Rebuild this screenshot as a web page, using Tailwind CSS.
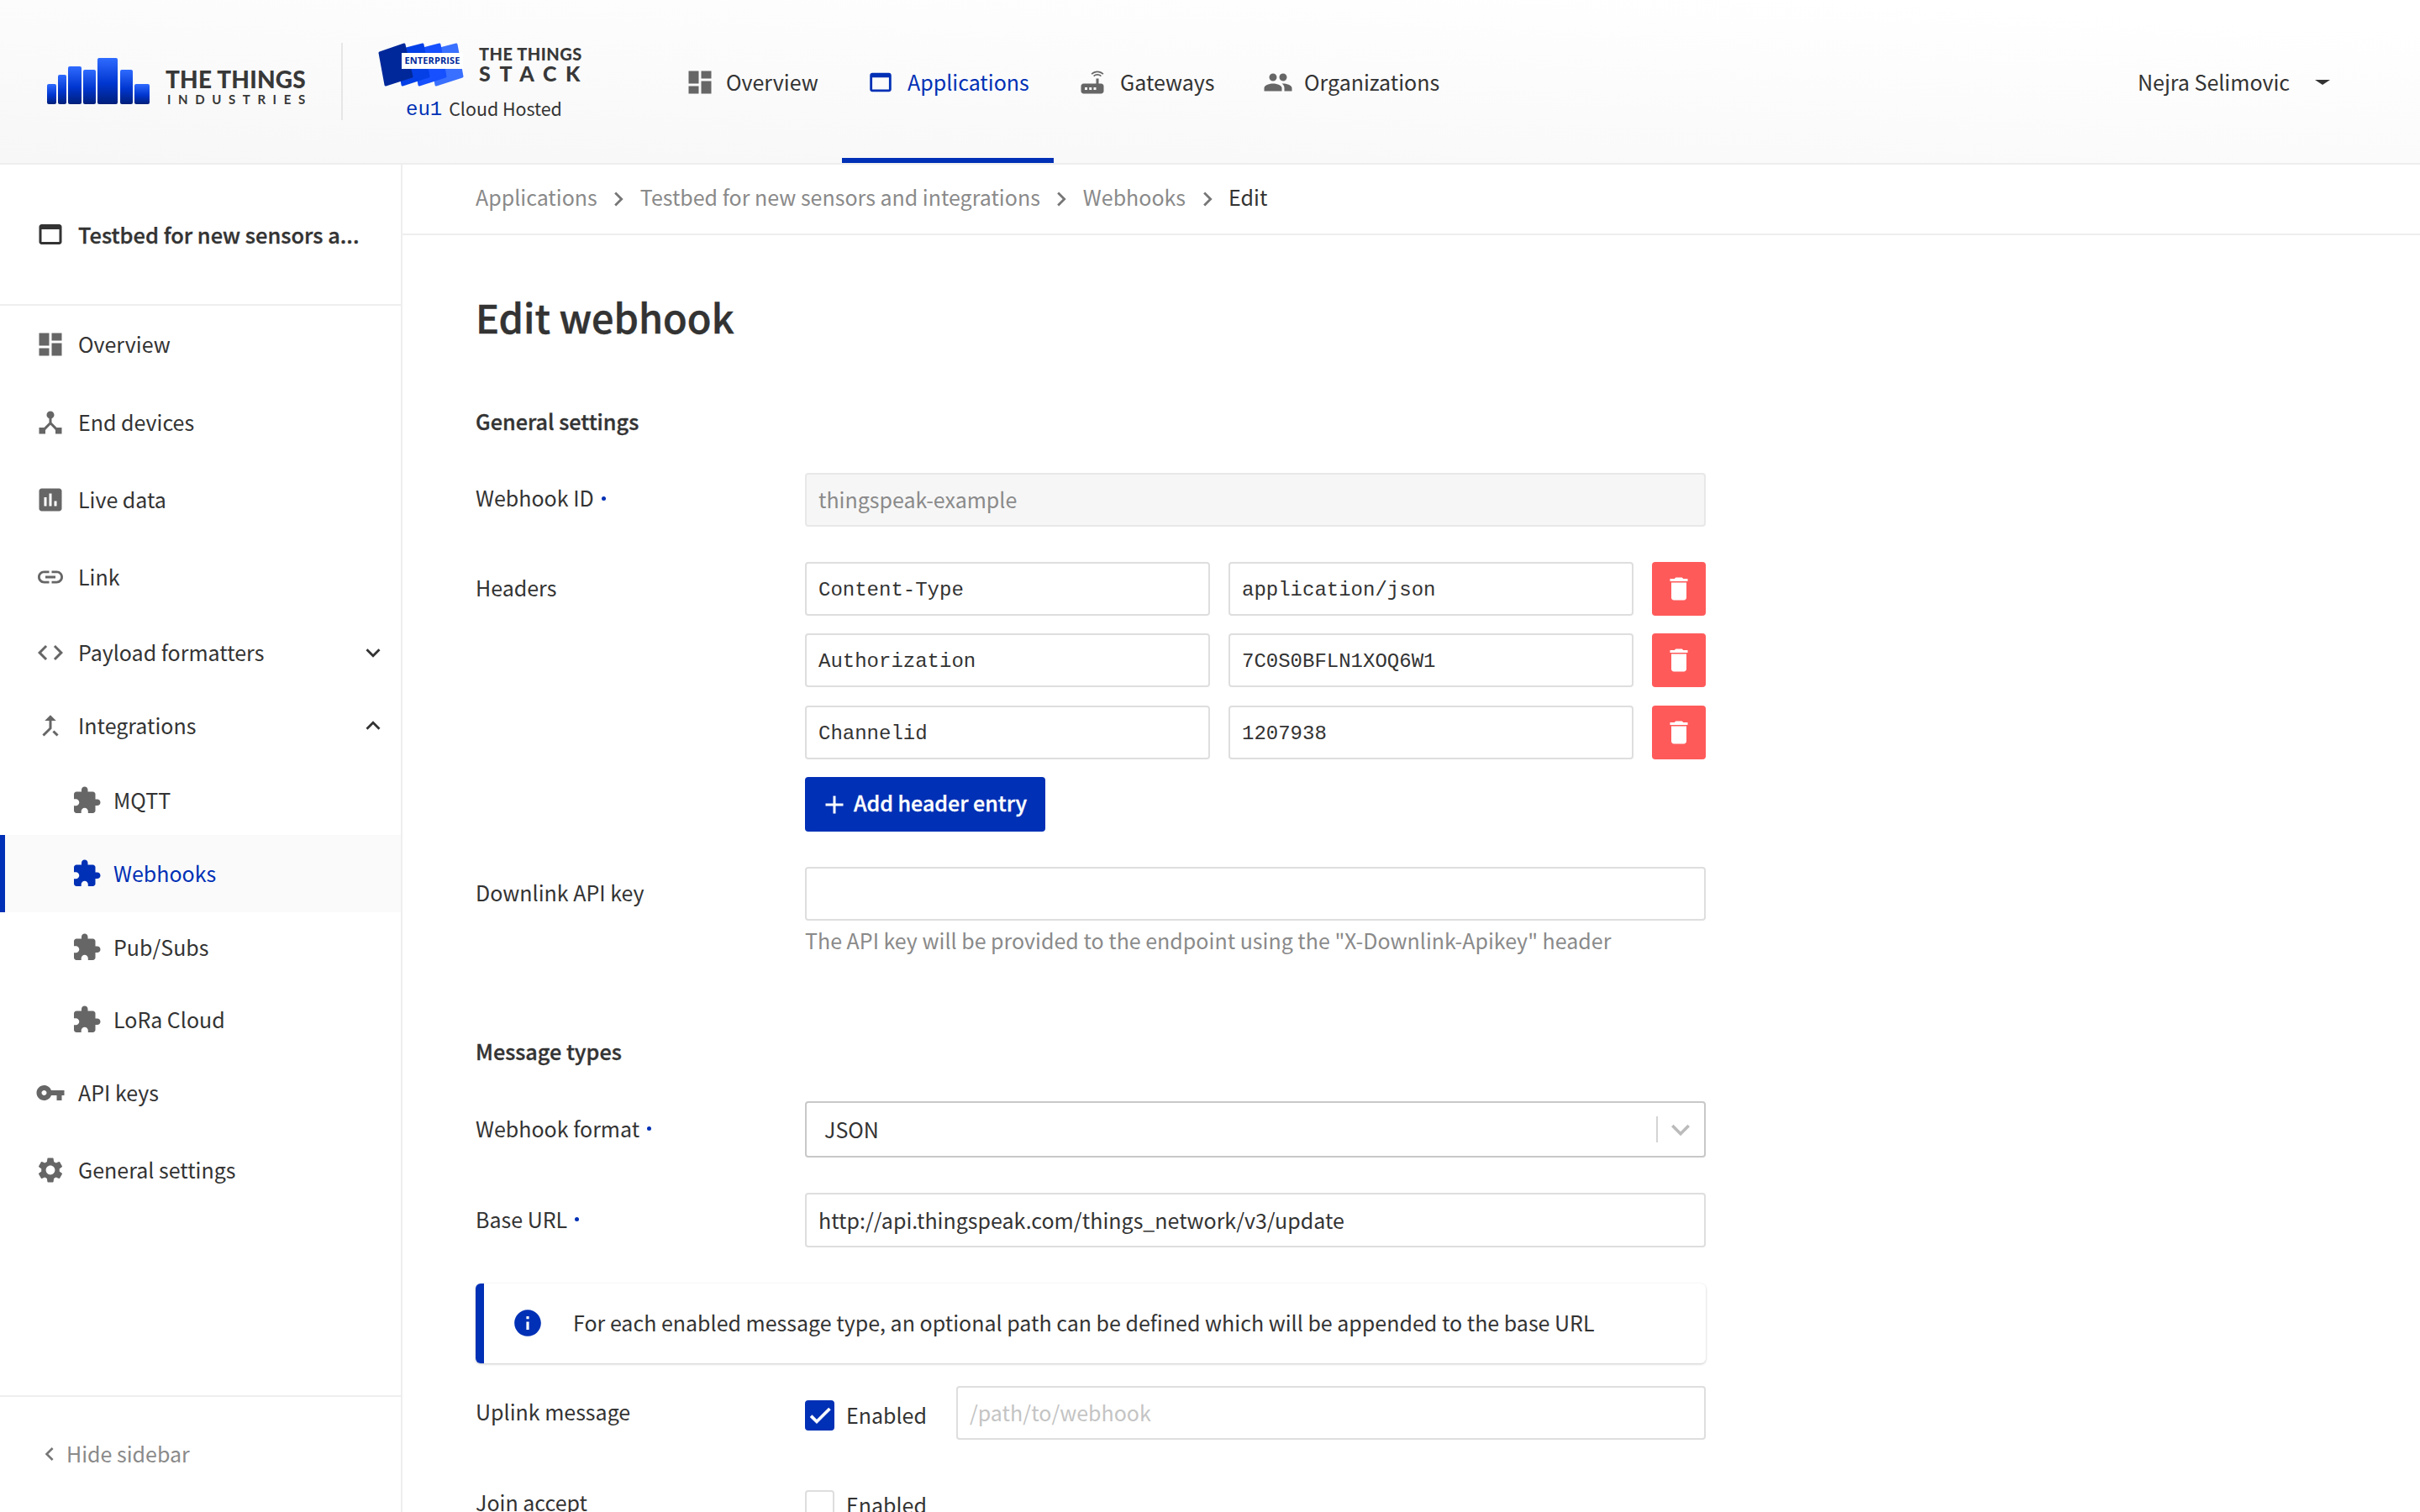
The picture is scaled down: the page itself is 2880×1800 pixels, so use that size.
<!DOCTYPE html>
<html lang="en">

<head>
  <meta charset="UTF-8" />
  <title>Edit webhook - The Things Stack</title>
  <script src="https://cdn.jsdelivr.net/npm/@tailwindcss/browser@4"></script>
</head>

<body class="font-['Noto_Sans_CJK_SC',sans-serif] text-[25px] text-[#333] bg-white">
  <div class="w-[2880px] h-[1800px] overflow-hidden flex flex-col">

    <!-- Top bar -->
    <header class="h-[196px] shrink-0 border-b-2 border-[#eee] bg-[linear-gradient(183deg,#fff_10%,#f7f7f7_100%)] flex items-start relative">
      <!-- TTI logo -->
      <div class="ml-[56px] mt-[69px] flex items-end w-[309px]">
        <svg width="122" height="55" viewBox="0 0 122 55" class="shrink-0">
          <defs>
            <linearGradient id="bars" x1="0" y1="0" x2="0" y2="1">
              <stop offset="0" stop-color="#2f6bff" />
              <stop offset="0.55" stop-color="#0036d0" />
              <stop offset="1" stop-color="#001f7a" />
            </linearGradient>
          </defs>
          <rect x="0" y="31" width="11" height="24" rx="2" fill="url(#bars)" />
          <rect x="13" y="20" width="10" height="35" rx="2" fill="url(#bars)" />
          <rect x="25" y="10" width="16" height="45" rx="2" fill="url(#bars)" />
          <rect x="43" y="14" width="15" height="41" rx="2" fill="url(#bars)" />
          <rect x="60" y="0" width="24" height="55" rx="2" fill="url(#bars)" />
          <rect x="87" y="14" width="15" height="41" rx="2" fill="url(#bars)" />
          <rect x="104" y="31" width="18" height="24" rx="2" fill="url(#bars)" />
        </svg>
        <div class="ml-[19px] mb-[-2px] font-['Lato',sans-serif] text-[#383838] leading-none">
          <div class="text-[28px] font-black tracking-[0.2px] whitespace-nowrap">THE THINGS</div>
          <div class="mt-[3px] ml-[2px] text-[15px] font-bold tracking-[8.6px] whitespace-nowrap">INDUSTRIES</div>
        </div>
      </div>

      <div class="w-[2px] h-[92px] mt-[51px] ml-[41px] bg-[#e6e6e6]"></div>

      <!-- Stack logo -->
      <div class="ml-[42px] mt-[51px] w-[240px] flex flex-col">
        <div class="flex">
          <div class="relative w-[102px] h-[52px] shrink-0">
            <svg width="102" height="52" viewBox="0 0 102 52">
              <g stroke-width="3" stroke-linejoin="round">
                <path d="M62 10 L93 2 L100 40 L69 50 Z" fill="#3a70ff" stroke="#3a70ff" />
                <path d="M42 10 L73 2 L80 40 L49 50 Z" fill="#1650ff" stroke="#1650ff" />
                <path d="M22 10 L53 2 L60 40 L29 50 Z" fill="#0440e6" stroke="#0440e6" />
                <path d="M2 12 L31 2 L40 40 L9 50 Z" fill="#00289a" stroke="#00289a" />
              </g>
            </svg>
            <div class="absolute left-[28px] top-[12px] w-[73px] h-[19px] bg-white flex items-center justify-center font-['Open_Sans',sans-serif] text-[11px] font-bold text-[#00299b] tracking-[0.1px]">ENTERPRISE</div>
          </div>
          <div class="ml-[18px] font-['Lato',sans-serif] font-black text-[#383838] leading-none">
            <div class="mt-[3px] text-[20px] tracking-[0.5px] whitespace-nowrap">THE THINGS</div>
            <div class="mt-[1px] text-[25px] tracking-[10.6px] whitespace-nowrap">STACK</div>
          </div>
        </div>
        <div class="mt-[10px] ml-[33px] h-[32px] flex items-center whitespace-nowrap text-[21.4px]">
          <span class="font-['Liberation_Mono',monospace] text-[24px] text-[#0030b5] mt-[3px]">eu1</span>
          <span class="ml-[8px]">Cloud Hosted</span>
        </div>
      </div>

      <!-- Main nav -->
      <nav class="absolute left-[802px] top-0 h-[194px] flex">
        <a class="h-full w-[200px] flex items-center gap-[8px] pl-[13px] pt-[2px]">
          <svg width="36" height="36" viewBox="0 0 24 24" fill="#666"><path d="M3 13h8V3H3v10zm0 8h8v-6H3v6zm10 0h8V11h-8v10zm0-18v6h8V3h-8z" /></svg>
          <span class="ml-[5px]">Overview</span>
        </a>
        <a class="h-full w-[252px] flex items-center gap-[8px] pl-[29px] pt-[2px] border-b-[6px] border-[#0030b5] text-[#0030b5]">
          <svg width="34" height="34" viewBox="0 0 24 24" fill="#0030b5" class="mb-[-6px]"><path d="M19 4H5c-1.11 0-2 .9-2 2v12c0 1.1.89 2 2 2h14c1.1 0 2-.9 2-2V6c0-1.1-.89-2-2-2zm0 14H5V8h14v10z" /></svg>
          <span class="ml-[7px] mb-[-6px]">Applications</span>
        </a>
        <a class="h-full w-[249px] flex items-center gap-[8px] pl-[28px] pt-[2px]">
          <svg width="36" height="36" viewBox="0 0 24 24" fill="#666"><path d="M20.2 5.9l.8-.8C19.6 3.7 17.8 3 16 3s-3.6.7-5 2.1l.8.8C13 4.8 14.5 4.2 16 4.2s3 .6 4.2 1.7zm-.9.8c-.9-.9-2.1-1.4-3.3-1.4s-2.4.5-3.3 1.4l.8.8c.7-.7 1.6-1 2.5-1 .9 0 1.8.3 2.5 1l.8-.8zM19 13h-2V9h-2v4H5c-1.1 0-2 .9-2 2v4c0 1.1.9 2 2 2h14c1.1 0 2-.9 2-2v-4c0-1.1-.9-2-2-2zM8 18H6v-2h2v2zm3.5 0h-2v-2h2v2zm3.5 0h-2v-2h2v2z" /></svg>
          <span class="ml-[7px]">Gateways</span>
        </a>
        <a class="h-full flex items-center gap-[8px] pt-[2px]">
          <svg width="36" height="36" viewBox="0 0 24 24" fill="#666"><path d="M16 11c1.66 0 2.99-1.34 2.99-3S17.66 5 16 5c-1.66 0-3 1.34-3 3s1.34 3 3 3zm-8 0c1.66 0 2.99-1.34 2.99-3S9.66 5 8 5C6.34 5 5 6.34 5 8s1.34 3 3 3zm0 2c-2.33 0-7 1.17-7 3.5V19h14v-2.5c0-2.33-4.67-3.5-7-3.5zm8 0c-.29 0-.62.02-.97.05 1.16.84 1.97 1.97 1.97 3.45V19h6v-2.5c0-2.33-4.67-3.5-7-3.5z" /></svg>
          <span class="ml-[5px]">Organizations</span>
        </a>
      </nav>

      <!-- User -->
      <div class="absolute left-[2544px] top-0 h-[194px] flex items-center pt-[2px]">
        <span>Nejra Selimovic</span>
        <span class="ml-[30px] w-0 h-0 border-x-[9px] border-x-transparent border-t-[6px] border-t-[#333]"></span>
      </div>
    </header>

    <div class="flex flex-1 min-h-0">
      <!-- Sidebar -->
      <aside class="w-[479px] shrink-0 border-r-2 border-[#eee] flex flex-col">
        <div class="h-[168px] border-b-2 border-[#eee] pl-[42px] flex items-center gap-[15px] shrink-0">
          <svg width="36" height="36" viewBox="0 0 24 24" fill="#333"><path d="M19 4H5c-1.11 0-2 .9-2 2v12c0 1.1.89 2 2 2h14c1.1 0 2-.9 2-2V6c0-1.1-.89-2-2-2zm0 14H5V8h14v10z" /></svg>
          <span class="text-[25.4px] font-medium [-webkit-text-stroke:0.35px] whitespace-nowrap">Testbed for new sensors a...</span>
        </div>

        <nav class="flex-1 flex flex-col mt-[-1px]">
          <a class="h-[93px] shrink-0 flex items-center gap-[15px] pl-[42px]">
            <svg width="36" height="36" viewBox="0 0 24 24" fill="#666"><path d="M3 13h8V3H3v10zm0 8h8v-6H3v6zm10 0h8V11h-8v10zm0-18v6h8V3h-8z" /></svg>
            <span>Overview</span>
          </a>
          <a class="h-[93px] shrink-0 flex items-center gap-[15px] pl-[42px]">
            <svg width="36" height="36" viewBox="0 0 24 24" fill="#666"><path d="M17 16l-4-4V8.82C14.16 8.4 15 7.3 15 6c0-1.66-1.34-3-3-3S9 4.34 9 6c0 1.3.84 2.4 2 2.82V12l-4 4H3v5h5v-3.05l4-4.2 4 4.2V21h5v-5h-4z" /></svg>
            <span>End devices</span>
          </a>
          <a class="h-[92px] shrink-0 flex items-center gap-[15px] pl-[42px]">
            <svg width="36" height="36" viewBox="0 0 24 24" fill="#666"><path d="M19 3H5c-1.1 0-2 .9-2 2v14c0 1.1.9 2 2 2h14c1.1 0 2-.9 2-2V5c0-1.1-.9-2-2-2zM9 17H7v-7h2v7zm4 0h-2V7h2v10zm4 0h-2v-4h2v4z" /></svg>
            <span>Live data</span>
          </a>
          <a class="h-[92px] shrink-0 flex items-center gap-[15px] pl-[42px]">
            <svg width="36" height="36" viewBox="0 0 24 24" fill="#666"><path d="M3.9 12c0-1.71 1.39-3.1 3.1-3.1h4V7H7c-2.76 0-5 2.24-5 5s2.24 5 5 5h4v-1.9H7c-1.71 0-3.1-1.39-3.1-3.1zM8 13h8v-2H8v2zm9-6h-4v1.9h4c1.71 0 3.1 1.39 3.1 3.1s-1.39 3.1-3.1 3.1h-4V17h4c2.76 0 5-2.24 5-5s-2.24-5-5-5z" /></svg>
            <span>Link</span>
          </a>
          <a class="h-[88px] shrink-0 flex items-center gap-[15px] pl-[42px]">
            <svg width="36" height="36" viewBox="0 0 24 24" fill="#666"><path d="M9.4 16.6L4.8 12l4.6-4.6L8 6l-6 6 6 6 1.4-1.4zm5.2 0l4.6-4.6-4.6-4.6L16 6l6 6-6 6-1.4-1.4z" /></svg>
            <span>Payload formatters</span>
            <svg width="34" height="34" viewBox="0 0 24 24" fill="#333" class="ml-auto mr-[16px]"><path d="M7.41 8.59L12 13.17l4.59-4.58L18 10l-6 6-6-6z" /></svg>
          </a>
          <a class="h-[89px] shrink-0 flex items-center gap-[15px] pl-[42px] pb-[4px]">
            <svg width="36" height="36" viewBox="0 0 24 24" fill="#666"><path d="M17 20.41L18.41 19 15 15.59 13.59 17 17 20.41zM7.5 8H11v5.59L5.59 19 7 20.41l6-6V8h3.5L12 3.5 7.5 8z" /></svg>
            <span>Integrations</span>
            <svg width="34" height="34" viewBox="0 0 24 24" fill="#333" class="ml-auto mr-[16px]"><path d="M7.41 15.41L12 10.83l4.59 4.58L18 14l-6-6-6 6z" /></svg>
          </a>
          <a class="h-[86px] shrink-0 flex items-center gap-[14px] pl-[85px]">
            <svg width="36" height="36" viewBox="0 0 24 24" fill="#666"><path d="M20.5 11H19V7c0-1.1-.9-2-2-2h-4V3.5C13 2.12 11.88 1 10.5 1S8 2.12 8 3.5V5H4c-1.1 0-1.99.9-1.99 2v3.8H3.5c1.49 0 2.7 1.21 2.7 2.7s-1.21 2.7-2.7 2.7H2V20c0 1.1.9 2 2 2h3.8v-1.5c0-1.49 1.21-2.7 2.7-2.7 1.49 0 2.7 1.21 2.7 2.7V22H17c1.1 0 2-.9 2-2v-4h1.5c1.38 0 2.5-1.12 2.5-2.5S21.88 11 20.5 11z" /></svg>
            <span>MQTT</span>
          </a>
          <a class="h-[92px] shrink-0 flex items-center gap-[14px] pl-[79px] border-l-[6px] border-[#0030b5] bg-[#fafafa] text-[#0030b5] my-[-2px]">
            <svg width="36" height="36" viewBox="0 0 24 24" fill="#0030b5"><path d="M20.5 11H19V7c0-1.1-.9-2-2-2h-4V3.5C13 2.12 11.88 1 10.5 1S8 2.12 8 3.5V5H4c-1.1 0-1.99.9-1.99 2v3.8H3.5c1.49 0 2.7 1.21 2.7 2.7s-1.21 2.7-2.7 2.7H2V20c0 1.1.9 2 2 2h3.8v-1.5c0-1.49 1.21-2.7 2.7-2.7 1.49 0 2.7 1.21 2.7 2.7V22H17c1.1 0 2-.9 2-2v-4h1.5c1.38 0 2.5-1.12 2.5-2.5S21.88 11 20.5 11z" /></svg>
            <span>Webhooks</span>
          </a>
          <a class="h-[87px] shrink-0 flex items-center gap-[14px] pl-[85px]">
            <svg width="36" height="36" viewBox="0 0 24 24" fill="#666"><path d="M20.5 11H19V7c0-1.1-.9-2-2-2h-4V3.5C13 2.12 11.88 1 10.5 1S8 2.12 8 3.5V5H4c-1.1 0-1.99.9-1.99 2v3.8H3.5c1.49 0 2.7 1.21 2.7 2.7s-1.21 2.7-2.7 2.7H2V20c0 1.1.9 2 2 2h3.8v-1.5c0-1.49 1.21-2.7 2.7-2.7 1.49 0 2.7 1.21 2.7 2.7V22H17c1.1 0 2-.9 2-2v-4h1.5c1.38 0 2.5-1.12 2.5-2.5S21.88 11 20.5 11z" /></svg>
            <span>Pub/Subs</span>
          </a>
          <a class="h-[85px] shrink-0 flex items-center gap-[14px] pl-[85px]">
            <svg width="36" height="36" viewBox="0 0 24 24" fill="#666"><path d="M20.5 11H19V7c0-1.1-.9-2-2-2h-4V3.5C13 2.12 11.88 1 10.5 1S8 2.12 8 3.5V5H4c-1.1 0-1.99.9-1.99 2v3.8H3.5c1.49 0 2.7 1.21 2.7 2.7s-1.21 2.7-2.7 2.7H2V20c0 1.1.9 2 2 2h3.8v-1.5c0-1.49 1.21-2.7 2.7-2.7 1.49 0 2.7 1.21 2.7 2.7V22H17c1.1 0 2-.9 2-2v-4h1.5c1.38 0 2.5-1.12 2.5-2.5S21.88 11 20.5 11z" /></svg>
            <span>LoRa Cloud</span>
          </a>
          <a class="h-[89px] shrink-0 flex items-center gap-[15px] pl-[42px]">
            <svg width="36" height="36" viewBox="0 0 24 24" fill="#666"><path d="M12.65 10C11.83 7.67 9.61 6 7 6c-3.31 0-6 2.69-6 6s2.69 6 6 6c2.61 0 4.83-1.67 5.65-4H17v4h4v-4h2v-4H12.65zM7 14c-1.1 0-2-.9-2-2s.9-2 2-2 2 .9 2 2-.9 2-2 2z" /></svg>
            <span>API keys</span>
          </a>
          <a class="h-[95px] shrink-0 flex items-center gap-[15px] pl-[42px]">
            <svg width="36" height="36" viewBox="0 0 24 24" fill="#666"><path d="M19.14 12.94c.04-.3.06-.61.06-.94 0-.32-.02-.64-.07-.94l2.03-1.58c.18-.14.23-.41.12-.61l-1.92-3.32c-.12-.22-.37-.29-.59-.22l-2.39.96c-.5-.38-1.03-.7-1.62-.94l-.36-2.54c-.04-.24-.24-.41-.48-.41h-3.84c-.24 0-.43.17-.47.41l-.36 2.54c-.59.24-1.13.57-1.62.94l-2.39-.96c-.22-.08-.47 0-.59.22L2.74 8.87c-.12.21-.08.47.12.61l2.03 1.58c-.05.3-.09.63-.09.94s.02.64.07.94l-2.03 1.58c-.18.14-.23.41-.12.61l1.92 3.32c.12.22.37.29.59.22l2.39-.96c.5.38 1.03.7 1.62.94l.36 2.54c.05.24.24.41.48.41h3.84c.24 0 .44-.17.47-.41l.36-2.54c.59-.24 1.13-.56 1.62-.94l2.39.96c.22.08.47 0 .59-.22l1.92-3.32c.12-.22.07-.47-.12-.61l-2.01-1.58zM12 15.6c-1.98 0-3.6-1.62-3.6-3.6s1.62-3.6 3.6-3.6 3.6 1.62 3.6 3.6-1.62 3.6-3.6 3.6z" /></svg>
            <span>General settings</span>
          </a>
        </nav>

        <div class="h-[139px] shrink-0 border-t-2 border-[#eee] pl-[43px] pb-[2px] flex items-center gap-[4px] text-[#8a8a8a]">
          <svg width="32" height="32" viewBox="0 0 24 24" fill="#777"><path d="M15.41 7.41L14 6l-6 6 6 6 1.41-1.41L10.83 12z" /></svg>
          <span>Hide sidebar</span>
        </div>
      </aside>

      <main class="flex-1 min-w-0">
        <!-- Breadcrumbs -->
        <div class="h-[84px] border-b-2 border-[#eee] pl-[87px] flex items-center text-[#8a8a8a] pb-[4px]">
          <span>Applications</span>
          <svg width="34" height="34" viewBox="0 0 24 24" fill="#777" class="mx-[8.5px] mt-[4px]"><path d="M10 6L8.59 7.41 13.17 12l-4.58 4.59L10 18l6-6z" /></svg>
          <span>Testbed for new sensors and integrations</span>
          <svg width="34" height="34" viewBox="0 0 24 24" fill="#777" class="mx-[8.5px] mt-[4px]"><path d="M10 6L8.59 7.41 13.17 12l-4.58 4.59L10 18l6-6z" /></svg>
          <span>Webhooks</span>
          <svg width="34" height="34" viewBox="0 0 24 24" fill="#777" class="mx-[8.5px] mt-[4px]"><path d="M10 6L8.59 7.41 13.17 12l-4.58 4.59L10 18l6-6z" /></svg>
          <span class="text-[#333]">Edit</span>
        </div>

        <div class="pl-[87px] w-[1551px]">
          <h1 class="mt-[67px] h-[60px] flex items-center text-[46.8px] font-medium [-webkit-text-stroke:0.5px]">Edit webhook</h1>

          <h2 class="mt-[80px] h-[30px] flex items-center text-[25.2px] font-medium [-webkit-text-stroke:0.35px]">General settings</h2>

          <!-- Webhook ID -->
          <div class="mt-[46px] flex">
            <label class="w-[392px] shrink-0 h-[64px] flex items-center pb-[4px]">Webhook ID<span class="ml-[9px] w-[5px] h-[5px] rounded-full bg-[#0030b5]"></span></label>
            <div class="flex-1 h-[64px] rounded-[4px] border-2 border-[#e8e8e8] bg-[#f6f6f6] px-[14px] flex items-center text-[#8a8a8a]">thingspeak-example</div>
          </div>

          <!-- Headers -->
          <div class="mt-[42px] flex">
            <label class="w-[392px] shrink-0 h-[64px] flex items-center pb-[2px]">Headers</label>
            <div class="flex-1 flex flex-col gap-[21px]">
              <div class="flex gap-[22px] h-[64px] font-['Liberation_Mono',monospace] text-[24px]">
                <div class="flex-1 rounded-[4px] border-2 border-[#dedede] px-[14px] pt-[3px] flex items-center">Content-Type</div>
                <div class="flex-1 rounded-[4px] border-2 border-[#dedede] px-[14px] pt-[3px] flex items-center">application/json</div>
                <button class="w-[64px] shrink-0 rounded-[4px] bg-[#ff5a5a] flex items-center justify-center">
                  <svg width="36" height="36" viewBox="0 0 24 24" fill="#fff"><path d="M6 19c0 1.1.9 2 2 2h8c1.1 0 2-.9 2-2V7H6v12zM19 4h-3.5l-1-1h-5l-1 1H5v2h14V4z" /></svg>
                </button>
              </div>
              <div class="flex gap-[22px] h-[64px] font-['Liberation_Mono',monospace] text-[24px]">
                <div class="flex-1 rounded-[4px] border-2 border-[#dedede] px-[14px] pt-[3px] flex items-center">Authorization</div>
                <div class="flex-1 rounded-[4px] border-2 border-[#dedede] px-[14px] pt-[3px] flex items-center">7C0S0BFLN1XOQ6W1</div>
                <button class="w-[64px] shrink-0 rounded-[4px] bg-[#ff5a5a] flex items-center justify-center">
                  <svg width="36" height="36" viewBox="0 0 24 24" fill="#fff"><path d="M6 19c0 1.1.9 2 2 2h8c1.1 0 2-.9 2-2V7H6v12zM19 4h-3.5l-1-1h-5l-1 1H5v2h14V4z" /></svg>
                </button>
              </div>
              <div class="flex gap-[22px] h-[64px] mt-[1px] font-['Liberation_Mono',monospace] text-[24px]">
                <div class="flex-1 rounded-[4px] border-2 border-[#dedede] px-[14px] pt-[3px] flex items-center">Channelid</div>
                <div class="flex-1 rounded-[4px] border-2 border-[#dedede] px-[14px] pt-[3px] flex items-center">1207938</div>
                <button class="w-[64px] shrink-0 rounded-[4px] bg-[#ff5a5a] flex items-center justify-center">
                  <svg width="36" height="36" viewBox="0 0 24 24" fill="#fff"><path d="M6 19c0 1.1.9 2 2 2h8c1.1 0 2-.9 2-2V7H6v12zM19 4h-3.5l-1-1h-5l-1 1H5v2h14V4z" /></svg>
                </button>
              </div>
              <button class="self-start h-[65px] w-[286px] rounded-[4px] bg-[#0030b5] text-white font-medium [-webkit-text-stroke:0.35px] flex items-center justify-center gap-[5px] pb-[3px] pr-[5px]">
                <svg width="36" height="36" viewBox="0 0 24 24" fill="#fff" class="mt-[3px]"><path d="M19 13h-6v6h-2v-6H5v-2h6V5h2v6h6v2z" /></svg>
                Add header entry
              </button>
            </div>
          </div>

          <!-- Downlink API key -->
          <div class="mt-[42px] flex">
            <label class="w-[392px] shrink-0 h-[64px] flex items-center pb-[2px]">Downlink API key</label>
            <div class="flex-1">
              <div class="h-[64px] rounded-[4px] border-2 border-[#dedede]"></div>
              <p class="mt-[6px] mb-[2px] h-[36px] flex items-center text-[#8a8a8a] whitespace-nowrap">The API key will be provided to the endpoint using the "X-Downlink-Apikey" header</p>
            </div>
          </div>

          <h2 class="mt-[97px] h-[30px] flex items-center text-[25.2px] font-medium [-webkit-text-stroke:0.35px]">Message types</h2>

          <!-- Webhook format -->
          <div class="mt-[44px] flex">
            <label class="w-[392px] shrink-0 h-[67px] flex items-center pb-[2px]">Webhook format<span class="ml-[9px] w-[5px] h-[5px] rounded-full bg-[#0030b5]"></span></label>
            <div class="flex-1 h-[67px] rounded-[4px] border-2 border-[#c8c8c8] pl-[21px] pr-[6px] flex items-center">
              <span>JSON</span>
              <span class="ml-auto w-[2px] h-[31px] bg-[#d4d4d4]"></span>
              <svg width="44" height="44" viewBox="0 0 24 24" fill="#bbb" class="ml-[5px]"><path d="M7.41 8.59L12 13.17l4.59-4.58L18 10l-6 6-6-6z" /></svg>
            </div>
          </div>

          <!-- Base URL -->
          <div class="mt-[42px] flex">
            <label class="w-[392px] shrink-0 h-[65px] flex items-center pb-[2px]">Base URL<span class="ml-[9px] w-[5px] h-[5px] rounded-full bg-[#0030b5]"></span></label>
            <div class="flex-1 h-[65px] rounded-[4px] border-2 border-[#dedede] px-[14px] flex items-center">http://api.thingspeak.com/things_network/v3/update</div>
          </div>

          <!-- Info note -->
          <div class="mt-[43px] h-[95px] rounded-[6px] border-l-[10px] border-[#0030b5] shadow-[0_1px_3px_rgba(0,0,0,0.22)] flex items-center pl-[33px] pb-[1px]">
            <svg width="38" height="38" viewBox="0 0 24 24" fill="#0030b5" class="shrink-0"><path d="M12 2C6.48 2 2 6.48 2 12s4.48 10 10 10 10-4.48 10-10S17.52 2 12 2zm1 15h-2v-6h2v6zm0-8h-2V7h2v2z" /></svg>
            <span class="ml-[35px] whitespace-nowrap">For each enabled message type, an optional path can be defined which will be appended to the base URL</span>
          </div>

          <!-- Uplink message -->
          <div class="mt-[27px] flex">
            <label class="w-[392px] shrink-0 h-[64px] flex items-center pb-[2px]">Uplink message</label>
            <div class="flex-1 flex h-[64px] items-center">
              <span class="w-[35px] h-[36px] rounded-[4px] bg-[#0030b5] flex items-center justify-center mt-[5px]">
                <svg width="32" height="32" viewBox="0 0 24 24" fill="#fff" stroke="#fff" stroke-width="0.8"><path d="M9 16.17L4.83 12l-1.42 1.41L9 19 21 7l-1.41-1.41z" /></svg>
              </span>
              <span class="ml-[14px] mt-[5px]">Enabled</span>
              <div class="ml-[35px] flex-1 h-[64px] rounded-[4px] border-2 border-[#dedede] px-[14px] flex items-center text-[#c4c4c4]">/path/to/webhook</div>
            </div>
          </div>

          <!-- Join accept -->
          <div class="mt-[43px] flex">
            <label class="w-[392px] shrink-0 h-[64px] flex items-center">Join accept</label>
            <div class="flex-1 flex h-[64px] items-center">
              <span class="w-[35px] h-[36px] rounded-[4px] border-2 border-[#dedede] mt-[5px]"></span>
              <span class="ml-[14px] mt-[5px]">Enabled</span>
            </div>
          </div>
        </div>
      </main>
    </div>
  </div>
</body>

</html>
